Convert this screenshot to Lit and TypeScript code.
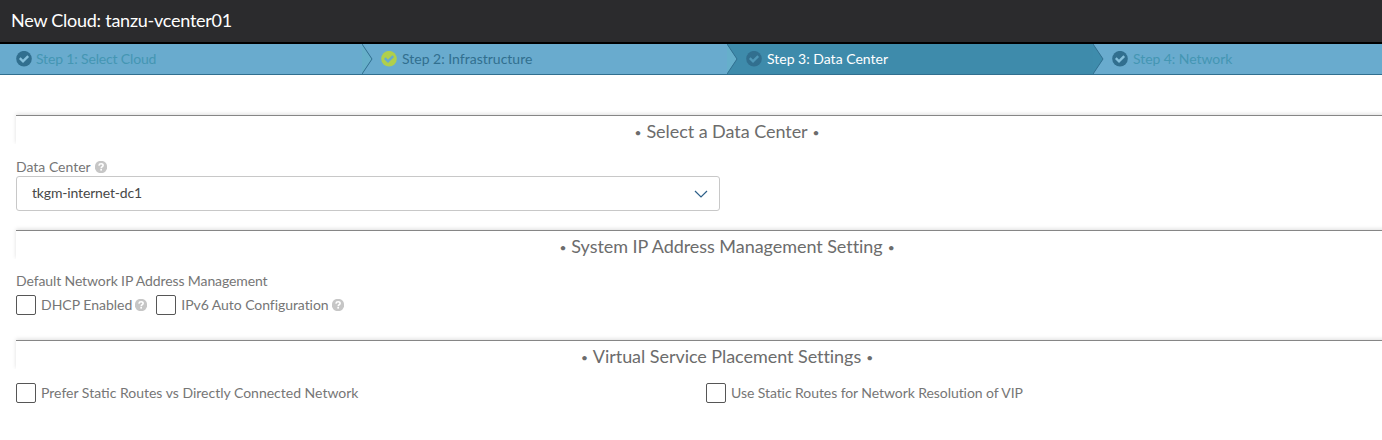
import { LitElement, html, css, nothing } from "lit";
import { customElement, property } from "lit/decorators.js";

@customElement("help-icon")
class HelpIcon extends LitElement {
  static styles = css`
    :host { display: block; width: 12px; height: 12px; }
    svg { display: block; }
  `;
  render() {
    return html`<svg width="12" height="12" viewBox="0 0 12 12">
      <circle cx="6" cy="6" r="6.2" fill="#c6c6c6" />
      <path d="M3.9 4.6C4.1 3.3 5 2.8 6.1 2.8c1.2 0 2 .6 2 1.6C8.1 5.8 6.3 5.6 6.2 7.3" fill="none" stroke="#fff" stroke-width="1.6" />
      <rect x="5.3" y="8" width="1.7" height="1.6" fill="#fff" />
    </svg>`;
  }
}

@customElement("check-option")
class CheckOption extends LitElement {
  @property() label = "";
  @property({ type: Boolean }) help = false;
  static styles = css`
    :host { display: flex; align-items: center; height: 20px; }
    .box { box-sizing: border-box; width: 20px; height: 20px; border: 1px solid #565656; border-radius: 2px; background: #fff; margin-right: 5px; flex: none; }
    .label { white-space: nowrap; line-height: 20px; height: 20px; }
    help-icon { margin-left: 3px; }
  `;
  render() {
    return html`<span class="box"></span><span class="label">${this.label}</span>${this.help ? html`<help-icon></help-icon>` : nothing}`;
  }
}

@customElement("section-heading")
class SectionHeading extends LitElement {
  @property() label = "";
  static styles = css`
    :host { display: flex; justify-content: center; gap: 5px; height: 28px; border-top: 1px solid #868686; box-shadow: 0 -1px 4px #dedede; clip-path: inset(-6px -6px 0 -6px); font-size: 18px; line-height: 31px; letter-spacing: -0.05px; color: #6c6c6c; white-space: nowrap; }
    .dot { font-size: 12px; line-height: 33px; }
  `;
  render() {
    return html`<span class="dot">•</span><span>${this.label}</span><span class="dot">•</span>`;
  }
}

const steps = [
  { label: "Step 1: Select Cloud", state: "muted first", disc: "#316f8f", tick: "#86c0dc", prev: "" },
  { label: "Step 2: Infrastructure", state: "done", disc: "#b0cf4b", tick: "#68abcd", prev: "#66afc9" },
  { label: "Step 3: Data Center", state: "current", disc: "#316f8f", tick: "#4f97b7", prev: "#66afcb" },
  { label: "Step 4: Network", state: "muted", disc: "#316f8f", tick: "#86c0dc", prev: "#3e8cac" },
];

@customElement("app-root")
class AppRoot extends LitElement {
  static styles = css`
    :host { display: block; height: 440px; overflow: hidden; background: #fff; font-family: Lato, "Liberation Sans", sans-serif; font-size: 14px; color: #767676; }
    .title { box-sizing: border-box; height: 44px; border-bottom: 2px solid #000; background: #2b2b2d; color: #fff; padding-left: 11px; font-size: 18px; line-height: 41px; letter-spacing: -0.25px; white-space: nowrap; }
    .steps { display: grid; grid-template-columns: 362px 365px 366px 1fr; height: 30px; border-bottom: 1px solid #316f8f; background: #69abce; }
    .step { display: flex; align-items: center; white-space: nowrap; }
    .step.first { padding-left: 16px; letter-spacing: -0.16px; }
    .first .disc { margin-right: 4px; }
    .name { height: 18px; line-height: 17px; }
    .arrow { display: block; margin-right: 8px; }
    .disc { display: block; margin-right: 5px; }
    .muted { color: #4496b3; letter-spacing: -0.06px; }
    .done { color: #316f8f; }
    .current { color: #fff; background: #3e8bab; }
    .content { width: 1422px; padding: 40px 0 0 16px; }
    .field { display: flex; align-items: center; height: 16px; line-height: 15px; margin-top: 15px; }
    .field span { height: 16px; }
    .field help-icon { margin-left: 4px; }
    .select { box-sizing: border-box; display: flex; align-items: center; justify-content: space-between; width: 704px; height: 35px; margin: 1px 0 19px; padding: 0 11px 0 15px; border: 1px solid #c8c8c8; border-radius: 3px; color: #484848; }
    .value { height: 20px; line-height: 18px; letter-spacing: -0.16px; }
    .field.tight { margin-top: 14px; letter-spacing: -0.11px; }
    .options { display: flex; gap: 9px; margin: 6px 0 25px; }
    .ipv6 { letter-spacing: -0.06px; }
    .vip { letter-spacing: -0.07px; }
    .columns { display: grid; grid-template-columns: 690px 1fr; margin-top: 14px; }
  `;
  render() {
    return html`
      <div class="title">New Cloud: tanzu-vcenter01</div>
      <div class="steps">${steps.map((s) => html`<div class="step ${s.state}">
        ${s.prev ? html`<svg class="arrow" width="11" height="30" viewBox="0 0 11 30"><path d="M0 0L10 15L0 30Z" fill=${s.prev} /><path d="M0 0L10 15L0 30" fill="none" stroke="#316f8f" /></svg>` : nothing}
        <svg class="disc" width="16" height="16" viewBox="0 0 16 16"><circle cx="8" cy="7.7" r="7.8" fill=${s.disc} /><path d="M3.8 7.2L7 10.3L12.2 5.1" fill="none" stroke=${s.tick} stroke-width="2.4" /></svg>
        <span class="name">${s.label}</span></div>`)}</div>
      <div class="content">
        <section-heading label="Select a Data Center"></section-heading>
        <div class="field"><span>Data Center</span><help-icon></help-icon></div>
        <div class="select"><span class="value">tkgm-internet-dc1</span><svg width="14" height="8" viewBox="0 0 14 8"><path d="M1 1L7 7L13 1" fill="none" stroke="#2d5f88" stroke-width="1.2" /></svg></div>
        <section-heading label="System IP Address Management Setting"></section-heading>
        <div class="field tight"><span>Default Network IP Address Management</span></div>
        <div class="options"><check-option label="DHCP Enabled" help></check-option><check-option class="ipv6" label="IPv6 Auto Configuration" help></check-option></div>
        <section-heading label="Virtual Service Placement Settings"></section-heading>
        <div class="columns"><check-option label="Prefer Static Routes vs Directly Connected Network"></check-option><check-option class="vip" label="Use Static Routes for Network Resolution of VIP"></check-option></div>
      </div>`;
  }
}
